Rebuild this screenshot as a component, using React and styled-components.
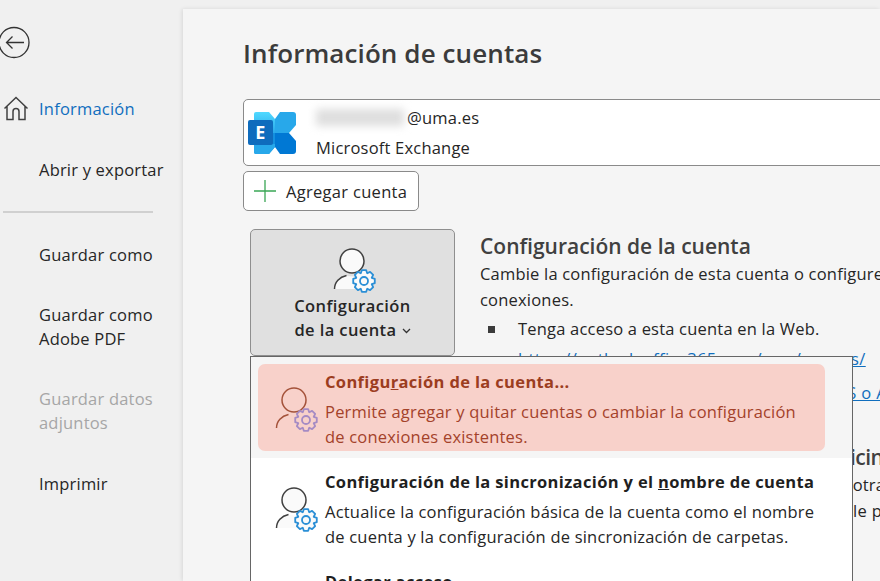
import styled, { createGlobalStyle } from "styled-components";

const GlobalStyle = createGlobalStyle`
  html, body {
    margin: 0;
    padding: 0;
    height: 100%;
    overflow: hidden;
    background: #f0f0f0;
  }
  * { box-sizing: border-box; }
`;

const Page = styled.div`
  width: 880px;
  height: 581px;
  display: flex;
  overflow: hidden;
  background: #f0f0f0;
  font-family: "Open Sans", "Noto Sans", sans-serif;
  font-size: 16.5px;
  letter-spacing: 0.2px;
  color: #262626;
`;

const Sidebar = styled.nav`
  width: 183px;
  flex-shrink: 0;
  padding-top: 26px;
`;

const BackButton = styled.div`
  height: 33px;
  margin-left: -3px;
  margin-bottom: 19px;
`;

const NavItem = styled.div`
  display: flex;
  align-items: center;
  min-height: ${(props) => props.h || 61}px;
  padding-left: 39px;
  line-height: 24px;
  position: relative;
  color: ${(props) =>
    props.active ? "#106ebe" : props.disabled ? "#a6a6a6" : "#262626"};
`;

const NavIcon = styled.span`
  position: absolute;
  left: 3px;
  top: 17px;
  display: flex;
`;

const NavDivider = styled.div`
  height: 2px;
  width: 150px;
  margin: 11px 0 0 3px;
  background: #d0d0d0;
`;

const Main = styled.main`
  flex: 1;
  margin-top: 9px;
  background: #f5f5f5;
  box-shadow: -1px 0 4px rgba(0, 0, 0, 0.1);
  padding: 26px 0 0 60px;
  overflow: hidden;
`;

const Title = styled.h1`
  margin: 0 0 28px;
  font-size: 26px;
  line-height: 36px;
  font-weight: 600;
  letter-spacing: 0.1px;
  color: #3b3b3b;
`;

const AccountCard = styled.div`
  width: 700px;
  height: 67px;
  display: flex;
  align-items: center;
  background: #fff;
  border: 1px solid #8a8a8a;
  border-radius: 5px;
  padding-left: 4px;
`;

const AccountText = styled.div`
  margin-left: 20px;
  line-height: 30px;
`;

const Email = styled.div`
  display: flex;
  align-items: center;
  margin-left: -3px;
`;

const BlurredName = styled.span`
  width: 88px;
  height: 17px;
  margin: 0 3px;
  background: #dedede;
  filter: blur(4px);
`;

const AddButton = styled.div`
  width: 176px;
  height: 40px;
  margin-top: 5px;
  display: flex;
  align-items: center;
  gap: 9px;
  padding-left: 9px;
  background: #fff;
  border: 1px solid #8a8a8a;
  border-radius: 5px;
  letter-spacing: 0.3px;
`;

const Section = styled.section`
  position: relative;
  display: flex;
  margin: 18px 0 0 7px;
`;

const SettingsButton = styled.div`
  width: 205px;
  height: 127px;
  flex-shrink: 0;
  display: flex;
  flex-direction: column;
  align-items: center;
  padding-top: 18px;
  background: #e0e0e0;
  border: 1px solid #8f8f8f;
  border-radius: 5px;
  font-weight: 600;
  letter-spacing: 0.4px;
  text-align: center;
  line-height: 24px;
`;

const ButtonIcon = styled.div`
  height: 44px;
  margin-left: 5px;
`;

const ButtonLabel = styled.div`
  margin-top: 2px;
`;

const Chevron = styled.svg`
  margin-left: 5px;
  vertical-align: 2px;
`;

const SectionText = styled.div`
  margin-left: 25px;
  padding-top: 2px;
  white-space: nowrap;
  line-height: 26px;
`;

const SectionTitle = styled.h2`
  margin: 0;
  font-size: 21px;
  line-height: 30px;
  font-weight: 600;
  letter-spacing: ${(props) => props.spacing || 0}px;
  color: #404040;
`;

const BulletRow = styled.div`
  display: flex;
  align-items: center;
  padding: 3px 0 0 8px;
`;

const Square = styled.span`
  width: 7px;
  height: 7px;
  margin-right: 23px;
  background: #3b3b3b;
`;

const LinkText = styled.a`
  display: block;
  color: #106ebe;
  text-decoration: underline;
  letter-spacing: 0.35px;
`;

const LinkGroup = styled.div`
  padding: 0 0 0 38px;
  line-height: 34px;
`;

const SecondTitle = styled(SectionTitle)`
  margin-top: 32px;
`;

const BodyLine = styled.div`
  letter-spacing: ${(props) => props.spacing}px;
`;

const Menu = styled.div`
  position: absolute;
  top: 127px;
  left: 0;
  width: 603px;
  height: 300px;
  background: #fff;
  border: 1px solid #666;
  border-bottom: none;
`;

const MenuRow = styled.div`
  height: ${(props) => (props.hovered ? 101 : 100)}px;
  padding: ${(props) => (props.hovered ? "7px 27px 7px 7px" : "0")};
  background: ${(props) => (props.hovered ? "#f5f5f5" : "#fff")};
`;

const MenuInner = styled.div`
  display: flex;
  height: ${(props) => (props.hovered ? "87px" : "100%")};
  padding: ${(props) => (props.hovered ? "5px 0 0 16px" : "11px 0 0 23px")};
  background: ${(props) => (props.hovered ? "#f8d1ca" : "transparent")};
  border-radius: 7px;
  color: ${(props) => (props.hovered ? "#a4422a" : "#262626")};
`;

const MenuIcon = styled.div`
  width: 51px;
  flex-shrink: 0;
  padding-top: 18px;
`;

const MenuText = styled.div`
  line-height: 25px;
  white-space: nowrap;
`;

const MenuTitle = styled.div`
  font-weight: 700;
  letter-spacing: 0.35px;
  margin-bottom: 5px;
  color: ${(props) => (props.hovered ? "#9c3d1f" : "#1f1f1f")};
`;

// engranaje de 8 dientes, el path se calcula una vez
const gearPath = (() => {
  const pts = [];
  for (let i = 0; i < 8; i++) {
    const a = (i * Math.PI) / 4 - Math.PI / 2;
    [
      [-0.39, 8.4],
      [-0.2, 11],
      [0.2, 11],
      [0.39, 8.4],
    ].forEach(([d, r]) => {
      pts.push(
        `${(12 + r * Math.cos(a + d)).toFixed(2)} ${(12 + r * Math.sin(a + d)).toFixed(2)}`
      );
    });
  }
  return "M" + pts.join("L") + "Z";
})();

const UserGear = ({ stroke = "#404040", gear = "#2b8fd6", fill = "#fafafa" }) => (
  <svg width="46" height="46" viewBox="0 0 46 46" fill="none">
    <path d="M2.5 41c0-7 5-12 12-13l14 1v12z" fill={fill} />
    <circle cx="20" cy="13" r="12" fill={fill} stroke={stroke} strokeWidth="1.5" />
    <path d="M2.5 41c0-7 5-12 12-13.5" stroke={stroke} strokeWidth="1.5" />
    <g transform="translate(20 21)">
      <path d={gearPath} fill={fill} stroke={gear} strokeWidth="1.8" strokeLinejoin="round" />
      <circle cx="12" cy="12" r="4" fill="none" stroke={gear} strokeWidth="1.8" />
    </g>
  </svg>
);

const ExchangeLogo = () => (
  <svg width="48" height="42" viewBox="0 0 48 42">
    <defs>
      <linearGradient id="exTop" x1="0" y1="0" x2="0" y2="1">
        <stop offset="0" stopColor="#50d9ff" />
        <stop offset="1" stopColor="#28a8ea" />
      </linearGradient>
    </defs>
    <path d="M8 0H21L27 7V21H6V2a2 2 0 0 1 2-2z" fill="url(#exTop)" />
    <path d="M6 21H27V35L21 42H8a2 2 0 0 1-2-2z" fill="#1490df" />
    <path d="M6 32H27V35L21 42H8a2 2 0 0 1-2-2z" fill="#28a8ea" />
    <path d="M27 7L32 0H45a3 3 0 0 1 3 3V13L41 21H27z" fill="#28a8ea" />
    <path d="M27 21H41L48 29V39a3 3 0 0 1-3 3H32L27 35z" fill="#0078d4" />
    <rect x="0" y="8" width="25" height="25" rx="2" fill="#0f6cbd" />
    <text x="12.5" y="27" fontSize="18" fontWeight="700" textAnchor="middle" fill="#fff">E</text>
  </svg>
);

const App = () => (
  <Page>
    <GlobalStyle />
    <Sidebar>
      <BackButton>
        <svg width="33" height="33" viewBox="0 0 33 33" fill="none" stroke="#333" strokeWidth="1.3">
          <circle cx="17" cy="16.5" r="15" />
          <path d="M9.5 16.5h17.5M15.5 10.5l-6 6 6 6" />
        </svg>
      </BackButton>
      <NavItem active>
        <NavIcon>
          <svg width="26" height="26" viewBox="0 0 26 26" fill="none" stroke="#404040" strokeWidth="1.5">
            <path d="M1.5 13.5 13 2.5l11.5 11M4 11.5v13h6v-8a3 3 0 0 1 6 0v8h6v-13" />
          </svg>
        </NavIcon>
        Información
      </NavItem>
      <NavItem>Abrir y exportar</NavItem>
      <NavDivider />
      <NavItem h={84}>Guardar como</NavItem>
      <NavItem h={60}>Guardar como<br />Adobe PDF</NavItem>
      <NavItem h={108} disabled>Guardar datos<br />adjuntos</NavItem>
      <NavItem h={38}>Imprimir</NavItem>
    </Sidebar>
    <Main>
      <Title>Información de cuentas</Title>
      <AccountCard>
        <ExchangeLogo />
        <AccountText>
          <Email><BlurredName />@uma.es</Email>
          Microsoft Exchange
        </AccountText>
      </AccountCard>
      <AddButton>
        <svg width="24" height="24" viewBox="0 0 24 24" stroke="#3aa655" strokeWidth="1.3">
          <path d="M12 1v22M1 12h22" />
        </svg>
        Agregar cuenta
      </AddButton>
      <Section>
        <SettingsButton>
          <ButtonIcon><UserGear /></ButtonIcon>
          <ButtonLabel>
            Configuración<br />
            de la cuenta
            <Chevron width="9" height="6" viewBox="0 0 9 6" fill="none" stroke="#333" strokeWidth="1.3">
              <path d="M1 1l3.5 3.5L8 1" />
            </Chevron>
          </ButtonLabel>
        </SettingsButton>
        <SectionText>
          <SectionTitle>Configuración de la cuenta</SectionTitle>
          Cambie la configuración de esta cuenta o configure más<br />
          conexiones.
          <BulletRow><Square />Tenga acceso a esta cuenta en la Web.</BulletRow>
          <LinkGroup>
            <LinkText>https://outlook.office365.com/owa/uma.es/</LinkText>
            <LinkText>Obtenga la aplicación de Outlook para iOS o Android</LinkText>
          </LinkGroup>
          <SecondTitle spacing={-0.6}>Respuestas automáticas (fuera de la oficina)</SecondTitle>
          <BodyLine spacing={0.12}>Use las respuestas automáticas para notificar a otras personas</BodyLine>
          <BodyLine spacing={0.35}>que está de vacaciones o que no está disponible para</BodyLine>
        </SectionText>
        <Menu>
          <MenuRow hovered>
            <MenuInner hovered>
              <MenuIcon><UserGear stroke="#a4523a" gear="#a58bc4" fill="#f8d1ca" /></MenuIcon>
              <MenuText>
                <MenuTitle hovered>Configu<u>r</u>ación de la cuenta...</MenuTitle>
                Permite agregar y quitar cuentas o cambiar la configuración<br />
                de conexiones existentes.
              </MenuText>
            </MenuInner>
          </MenuRow>
          <MenuRow>
            <MenuInner>
              <MenuIcon><UserGear /></MenuIcon>
              <MenuText>
                <MenuTitle>Configuración de la sincronización y el <u>n</u>ombre de cuenta</MenuTitle>
                Actualice la configuración básica de la cuenta como el nombre<br />
                de cuenta y la configuración de sincronización de carpetas.
              </MenuText>
            </MenuInner>
          </MenuRow>
          <MenuRow>
            <MenuInner>
              <MenuIcon />
              <MenuText>
                <MenuTitle>Delegar acceso</MenuTitle>
              </MenuText>
            </MenuInner>
          </MenuRow>
        </Menu>
      </Section>
    </Main>
  </Page>
);

export default App;
